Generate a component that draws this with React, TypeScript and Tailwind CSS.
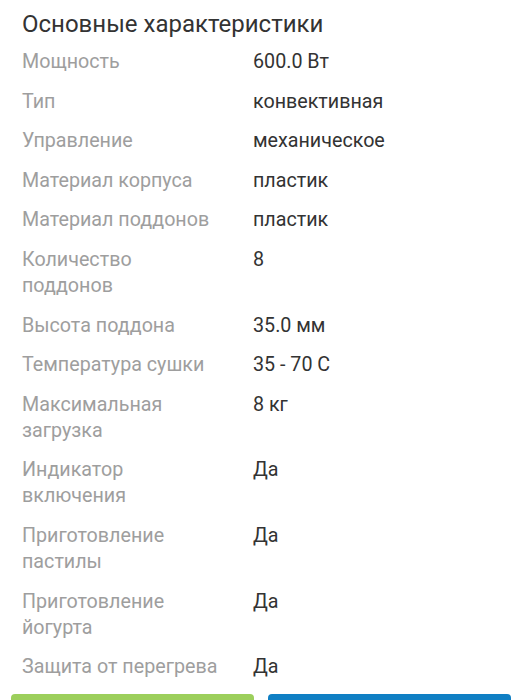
import React from "react";

const rows: [string[], string][] = [
  [["Мощность"], "600.0 Вт"],
  [["Тип"], "конвективная"],
  [["Управление"], "механическое"],
  [["Материал корпуса"], "пластик"],
  [["Материал поддонов"], "пластик"],
  [["Количество", "поддонов"], "8"],
  [["Высота поддона"], "35.0 мм"],
  [["Температура сушки"], "35 - 70 С"],
  [["Максимальная", "загрузка"], "8 кг"],
  [["Индикатор", "включения"], "Да"],
  [["Приготовление", "пастилы"], "Да"],
  [["Приготовление", "йогурта"], "Да"],
  [["Защита от перегрева"], "Да"],
];

export default function App() {
  return (
    <div
      className="w-[531px] h-[700px] overflow-hidden bg-white"
      style={{ fontFamily: "Roboto, 'Noto Sans', sans-serif" }}
    >
      <div className="px-[22px] pt-[8px]">
        <h1 className="text-[24px] leading-[32px] text-[#333333] font-normal">
          Основные характеристики
        </h1>
        <div className="mt-[9px] flex flex-col">
          {rows.map(([label, value], i) => (
            <div key={i} className="flex pb-[13.6px] text-[19.7px] leading-[26px]">
              <div className="w-[231px] shrink-0 text-[#9e9e9e] whitespace-nowrap">
                {label.map((l, j) => (
                  <div key={j}>{l}</div>
                ))}
              </div>
              <div className="text-[#333333] whitespace-nowrap">{value}</div>
            </div>
          ))}
        </div>
      </div>
      <div className="flex gap-[14px] px-[11px] pr-[20px]">
        <div className="flex-1 h-[40px] rounded-t-[4px] bg-[#9ccf5c]" />
        <div className="flex-1 h-[40px] rounded-t-[4px] bg-[#0f7fc4]" />
      </div>
    </div>
  );
}
